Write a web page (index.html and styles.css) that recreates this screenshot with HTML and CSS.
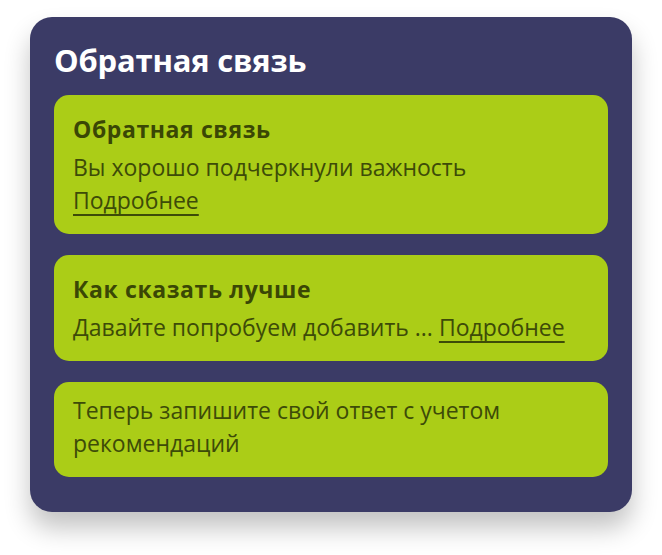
FILE: index.html
```html
<!DOCTYPE html>
<html lang="ru">
<head>
<meta charset="utf-8">
<link rel="stylesheet" href="styles.css">
</head>
<body>
<section class="panel">
  <h1 class="panel-title">Обратная связь</h1>
  <div class="cards">
    <div class="card">
      <h2 class="card-title">Обратная связь</h2>
      <p class="card-text">Вы хорошо подчеркнули важность <a class="more" href="#">Подробнее</a></p>
    </div>
    <div class="card">
      <h2 class="card-title">Как сказать лучше</h2>
      <p class="card-text">Давайте попробуем добавить ... <a class="more" href="#">Подробнее</a></p>
    </div>
    <div class="card">
      <p class="card-text">Теперь запишите свой ответ с учетом рекомендаций</p>
    </div>
  </div>
</section>
</body>
</html>
```
FILE: styles.css
```css
html, body {
  margin: 0;
  background: #ffffff;
}
body {
  padding: 17px 30px 43px 30px;
  min-height: 555px;
  box-sizing: border-box;
  font-family: "Open Sans", "Noto Sans", sans-serif;
}
.panel {
  width: 602px;
  box-sizing: border-box;
  background: #3b3b66;
  border-radius: 22px;
  padding: 23px 24px 35px 24px;
  box-shadow: 0 16px 26px rgba(0, 0, 0, 0.24);
}
.panel-title {
  margin: 0 0 15px 0;
  color: #ffffff;
  font-size: 31px;
  line-height: 40px;
  font-weight: 700;
  letter-spacing: -0.2px;
}
.cards {
  display: flex;
  flex-direction: column;
  gap: 21px;
}
.card {
  background: #abcd17;
  border-radius: 15px;
  padding: 12px 19px 17px 19px;
  color: #3d4b08;
}
.card-title {
  margin: 0 0 7px 0;
  padding-top: 7px;
  font-size: 23px;
  line-height: 30px;
  font-weight: 700;
  letter-spacing: 0.6px;
  color: #3a4705;
}
.card-text {
  margin: 0;
  font-size: 23px;
  line-height: 33px;
  font-weight: 400;
}
.more {
  color: inherit;
  text-decoration: underline;
  text-decoration-thickness: 2px;
  text-underline-offset: 5px;
  text-decoration-skip-ink: none;
}
```
